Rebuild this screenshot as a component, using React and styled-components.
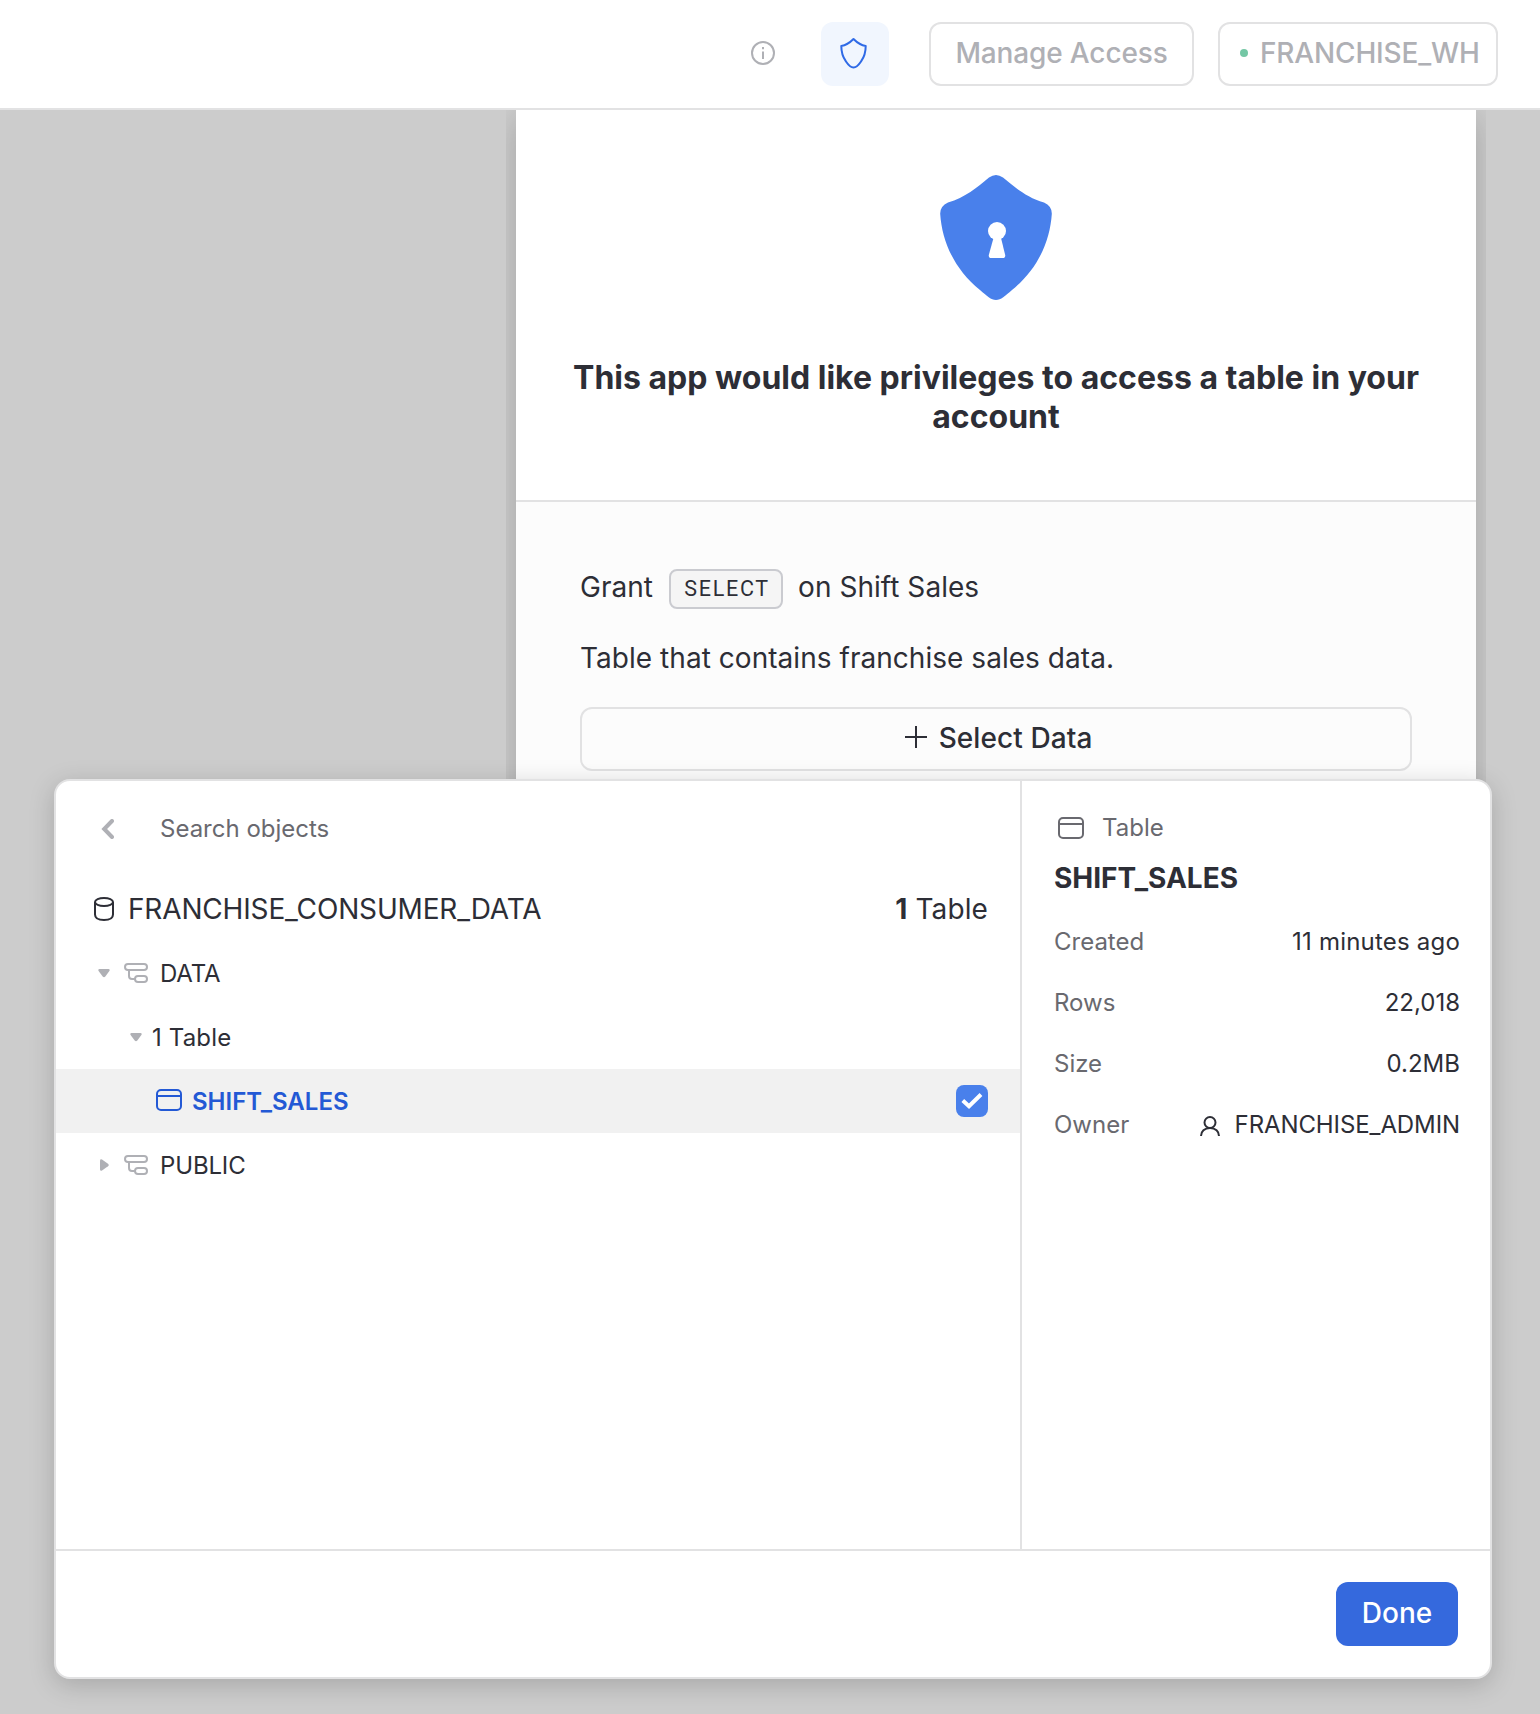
import React from "react";
import styled, { createGlobalStyle } from "styled-components";

const c = {
  ink: "#2d2e36",
  muted: "#69696f",
  faint: "#afb0b5",
  line: "#e2e2e3",
  link: "#2359d5",
  blue: "#4980eb",
  action: "#3569dd",
};

const GlobalStyle = createGlobalStyle`
  *, *::before, *::after { box-sizing: border-box; }
  body {
    margin: 0;
    background: #cccccc;
    color: ${c.ink};
    font-family: Inter, "Liberation Sans", sans-serif;
    font-size: 24px;
  }
  button { font: inherit; color: inherit; background: none; border: 0; padding: 0; margin: 0; }
  svg { display: block; flex: none; }
`;

const Page = styled.div`
  position: relative;
  height: 1714px;
  overflow: hidden;
`;

const Header = styled.header`
  height: 110px;
  padding-right: 42px;
  display: flex;
  align-items: center;
  justify-content: flex-end;
  background: #fff;
  border-bottom: 2px solid ${c.line};
`;

const InfoButton = styled.button`
  margin: 0 46px 2px 0;
`;

const ShieldButton = styled.button`
  width: 68px;
  height: 64px;
  margin-right: 40px;
  padding: 0 2px 2px 0;
  display: flex;
  align-items: center;
  justify-content: center;
  border-radius: 12px;
  background: #f1f6fe;
`;

const OutlineButton = styled.button`
  width: ${(p) => p.$width};
  height: 64px;
  margin-right: ${(p) => p.$gap || 0};
  padding: ${(p) => p.$padding || "0 0 2px"};
  display: flex;
  align-items: center;
  justify-content: ${(p) => p.$justify || "center"};
  border: 2px solid ${c.line};
  border-radius: 12px;
  font-size: 28px;
  font-weight: 500;
  line-height: 40px;
  letter-spacing: ${(p) => p.$tracking || 0};
  white-space: nowrap;
  color: ${(p) => (p.$active ? c.ink : c.faint)};
`;

const StatusDot = styled.span`
  width: 8px;
  height: 8px;
  margin-right: 12px;
  border-radius: 50%;
  background: #74c7a5;
`;

const DialogClip = styled.section`
  width: 980px;
  height: 900px;
  margin-left: 506px;
  padding: 0 10px;
  overflow: hidden;
`;

const Dialog = styled.div`
  height: 900px;
  display: flex;
  flex-direction: column;
  background: #fcfcfc;
  box-shadow: 0 8px 32px rgba(0, 0, 0, 0.2);
`;

const DialogHero = styled.div`
  height: 392px;
  padding-top: 65px;
  display: flex;
  flex-direction: column;
  align-items: center;
  background: #fff;
  border-bottom: 2px solid ${c.line};
`;

const DialogTitle = styled.h1`
  width: 860px;
  margin: 57px 0 0;
  font-size: 32px;
  line-height: 39px;
  font-weight: 700;
  text-align: center;
`;

const DialogBody = styled.div`
  padding: 63px 64px 0;
  display: flex;
  flex-direction: column;
  font-size: 28px;
  line-height: 44px;
  letter-spacing: 0.04px;
`;

const GrantLine = styled.div`
  height: 44px;
  display: flex;
  align-items: center;
`;

const Privilege = styled.code`
  width: 114px;
  height: 40px;
  margin: 4px 15px 0 16px;
  padding-left: 2px;
  display: flex;
  align-items: center;
  justify-content: center;
  border: 2px solid #cacbd0;
  border-radius: 8px;
  background: #f5f5f5;
  font-family: Roboto, sans-serif;
  font-size: 21.5px;
  line-height: 32px;
  letter-spacing: 1.7px;
`;

const Description = styled.p`
  margin: 27px 0;
`;

const Popover = styled.section`
  position: absolute;
  left: 54px;
  top: 779px;
  width: 1438px;
  height: 900px;
  display: flex;
  flex-direction: column;
  border: 2px solid ${c.line};
  border-radius: 16px;
  background: #fff;
  box-shadow: 0 6px 26px rgba(0, 0, 0, 0.18);
`;

const Columns = styled.div`
  flex: 1;
  display: flex;
`;

const Browser = styled.div`
  width: 966px;
  border-right: 2px solid ${c.line};
`;

const SearchRow = styled.div`
  height: 96px;
  padding-left: 44px;
  display: flex;
  align-items: center;
  color: ${c.muted};
`;

const SearchLabel = styled.span`
  margin: 0 0 2px 46px;
`;

const DatabaseRow = styled.div`
  height: 64px;
  padding: 0 32px 0 38px;
  display: flex;
  align-items: center;
  font-size: 28px;
`;

const DatabaseName = styled.span`
  flex: 1;
  margin-left: 14px;
  letter-spacing: -0.16px;
`;

const TableCount = styled.span`
  letter-spacing: 0.12px;
`;

const TreeRow = styled.div`
  height: 64px;
  padding: 0 32px 0 ${(p) => p.$indent};
  display: flex;
  align-items: center;
  background: ${(p) => (p.$selected ? "#f1f1f1" : "transparent")};
  color: ${(p) => (p.$selected ? c.link : c.ink)};
  font-weight: ${(p) => (p.$selected ? 600 : 400)};
`;

const TreeLabel = styled.span`
  flex: 1;
  margin-left: ${(p) => p.$gap};
  letter-spacing: ${(p) => p.$tracking || 0};
`;

const Lifted = styled.span`
  padding-bottom: 2px;
`;

const Spacer = styled.span`
  width: ${(p) => p.$w};
`;

const Checkbox = styled.span`
  width: 32px;
  height: 32px;
  display: flex;
  align-items: center;
  justify-content: center;
  border-radius: 8px;
  background: ${c.blue};
`;

const Details = styled.aside`
  flex: 1;
  padding: 30px 30px 0 32px;
`;

const DetailKind = styled.div`
  height: 34px;
  padding-left: 4px;
  display: flex;
  align-items: center;
  gap: 18px;
  color: ${c.muted};
`;

const DetailTitle = styled.h2`
  height: 66px;
  margin: 0;
  padding-top: 13px;
  font-size: 28px;
  line-height: 40px;
  font-weight: 700;
`;

const Property = styled.div`
  height: 61px;
  display: flex;
  align-items: center;
  justify-content: space-between;
`;

const PropertyName = styled.span`
  color: ${c.muted};
`;

const PropertyValue = styled.span`
  display: flex;
  align-items: center;
  gap: 15px;
  letter-spacing: ${(p) => p.$tracking || 0};
`;

const Footer = styled.footer`
  height: 128px;
  padding-right: 32px;
  display: flex;
  align-items: center;
  justify-content: flex-end;
  border-top: 2px solid ${c.line};
`;

const DoneButton = styled.button`
  width: 122px;
  height: 64px;
  padding-bottom: 2px;
  border-radius: 12px;
  background: ${c.action};
  color: #fff;
  font-size: 28px;
  font-weight: 500;
`;

const InfoIcon = () => (
  <svg width="24" height="24" viewBox="0 0 24 24" fill="none" stroke={c.faint} strokeWidth="2">
    <circle cx="12" cy="12" r="11" />
    <path d="M12 10.500V18M12 6v2.200" />
  </svg>
);

const ShieldIcon = () => (
  <svg width="28" height="32" viewBox="0 0 28 32" fill="none" stroke="#2f6ae6" strokeWidth="2" strokeLinejoin="round">
    <path d="M13.500 2C10.500 5 6 8.300 1.300 9C1.300 16 2.800 20 5.800 24.200C8 27.500 11.500 30.500 13.500 30.500S19 27.500 21.200 24.200C24.200 20 25.700 16 25.700 9C21 8.300 16.500 5 13.500 2Z" />
  </svg>
);

const ShieldLock = () => (
  <svg width="112" height="126" viewBox="0 0 112 126">
    <path fill={c.blue} d="M49 2.500Q56 -2.500 63 2.500C75 12.500 87 22.500 104 27.500Q112 31 111.800 39C110 66 98 94 72 115C65 121 61 125 56 125S47 121 40 115C14 94 2 66 .2 39Q0 31 8 27.500C25 22.500 37 12.500 49 2.500Z" />
    <circle cx="57" cy="56" r="9" fill="#fff" />
    <path fill="#fff" d="M53.500 63h7.500l4.200 17q.4 3-2.600 3H51.400q-3 0-2.600-3Z" />
  </svg>
);

const PlusSvg = styled.svg`
  margin-bottom: 2px;
`;

const PlusIcon = () => (
  <PlusSvg width="22" height="22" viewBox="0 0 22 22" stroke={c.ink} strokeWidth="2">
    <path d="M11 0v22M0 11h22" />
  </PlusSvg>
);

const BackIcon = () => (
  <svg width="14" height="20" viewBox="0 0 14 20" fill="none" stroke={c.faint} strokeWidth="4">
    <path d="M12 2L4.200 10L12 18" strokeLinecap="round" strokeLinejoin="miter" />
  </svg>
);

const DatabaseIcon = () => (
  <svg width="20" height="24" viewBox="0 0 20 24" fill="none" stroke={c.ink} strokeWidth="2">
    <ellipse cx="10" cy="5" rx="9" ry="4" />
    <path d="M1 5v12.500C1 21 4 23 10 23s9-2 9-5.500V5" />
  </svg>
);

const Caret = ({ open }) => (
  <svg width="12" height="12" viewBox="0 0 12 12" fill={c.faint}>
    {open ? (
      <path d="M1.500 2h9Q12.300 2.300 11.400 4L7.300 9.500Q6 11 4.700 9.500L.6 4Q-.3 2.300 1.500 2Z" />
    ) : (
      <path d="M2 1.500Q2.300-.3 4 .6L10 4.700Q11.500 6 10 7.300L4 11.400Q2.300 12.300 2 10.500Z" />
    )}
  </svg>
);

const SchemaIcon = () => (
  <svg width="24" height="20" viewBox="0 0 24 20" fill="none" stroke={c.faint} strokeWidth="2">
    <rect x="1" y="1" width="22" height="6" rx="3" />
    <rect x="11" y="13" width="12" height="6" rx="3" />
    <path d="M5 7v6q0 3 3 3h3" />
  </svg>
);

const TableIcon = ({ color }) => (
  <svg width="26" height="22" viewBox="0 0 26 22" fill="none" stroke={color} strokeWidth="2">
    <rect x="1" y="1" width="24" height="20" rx="4" />
    <path d="M1 7h24" />
  </svg>
);

const CheckIcon = () => (
  <svg width="22" height="16" viewBox="0 0 22 16" fill="none" stroke="#fff" strokeWidth="4">
    <path d="M1.800 7.500L8 13.200L20 1.500" />
  </svg>
);

const UserSvg = styled.svg`
  margin-top: 2px;
`;

const UserIcon = () => (
  <UserSvg width="20" height="20" viewBox="0 0 20 20" fill="none" stroke={c.ink} strokeWidth="2">
    <circle cx="10" cy="6.500" r="5.500" />
    <path d="M1 20C1 15.500 4.500 12 10 12s9 3.500 9 8" />
  </UserSvg>
);

const properties = [
  { name: "Created", value: "11 minutes ago", tracking: "0.2px" },
  { name: "Rows", value: "22,018" },
  { name: "Size", value: "0.2MB" },
  { name: "Owner", value: "FRANCHISE_ADMIN", tracking: "-0.1px", icon: <UserIcon /> },
];

export default function App() {
  return (
    <Page>
      <GlobalStyle />
      <Header>
        <InfoButton><InfoIcon /></InfoButton>
        <ShieldButton><ShieldIcon /></ShieldButton>
        <OutlineButton $width="265px" $gap="24px" $tracking="-0.14px">Manage Access</OutlineButton>
        <OutlineButton $width="280px" $justify="flex-start" $padding="0 0 2px 20px" $tracking="-0.16px">
          <StatusDot />
          FRANCHISE_WH
        </OutlineButton>
      </Header>

      <DialogClip>
        <Dialog>
          <DialogHero>
            <ShieldLock />
            <DialogTitle>This app would like privileges to access a table in your account</DialogTitle>
          </DialogHero>
          <DialogBody>
            <GrantLine>
              <span>Grant</span>
              <Privilege>SELECT</Privilege>
              <span>on Shift Sales</span>
            </GrantLine>
            <Description>Table that contains franchise sales data.</Description>
            <OutlineButton $width="832px" $active $padding="0 0 2px 5px" $tracking="0.08px">
              <PlusIcon />
              <Spacer $w="12px" />
              Select Data
            </OutlineButton>
          </DialogBody>
        </Dialog>
      </DialogClip>

      <Popover>
        <Columns>
          <Browser>
            <SearchRow>
              <BackIcon />
              <SearchLabel>Search objects</SearchLabel>
            </SearchRow>
            <DatabaseRow>
              <DatabaseIcon />
              <DatabaseName>FRANCHISE_CONSUMER_DATA</DatabaseName>
              <TableCount><b>1</b> Table</TableCount>
            </DatabaseRow>
            <TreeRow $indent="42px">
              <Caret open />
              <Spacer $w="14px" />
              <SchemaIcon />
              <TreeLabel $gap="12px" $tracking="-0.15px">DATA</TreeLabel>
            </TreeRow>
            <TreeRow $indent="74px">
              <Caret open />
              <TreeLabel $gap="10px" $tracking="0.15px">1 Table</TreeLabel>
            </TreeRow>
            <TreeRow $indent="100px" $selected>
              <Lifted><TableIcon color={c.link} /></Lifted>
              <TreeLabel $gap="10px">SHIFT_SALES</TreeLabel>
              <Checkbox><CheckIcon /></Checkbox>
            </TreeRow>
            <TreeRow $indent="42px">
              <Caret />
              <Spacer $w="14px" />
              <SchemaIcon />
              <TreeLabel $gap="12px" $tracking="-0.15px">PUBLIC</TreeLabel>
            </TreeRow>
          </Browser>
          <Details>
            <DetailKind>
              <TableIcon color={c.muted} />
              <Lifted>Table</Lifted>
            </DetailKind>
            <DetailTitle>SHIFT_SALES</DetailTitle>
            {properties.map((p) => (
              <Property key={p.name}>
                <PropertyName>{p.name}</PropertyName>
                <PropertyValue $tracking={p.tracking}>
                  {p.icon}
                  {p.value}
                </PropertyValue>
              </Property>
            ))}
          </Details>
        </Columns>
        <Footer>
          <DoneButton>Done</DoneButton>
        </Footer>
      </Popover>
    </Page>
  );
}
